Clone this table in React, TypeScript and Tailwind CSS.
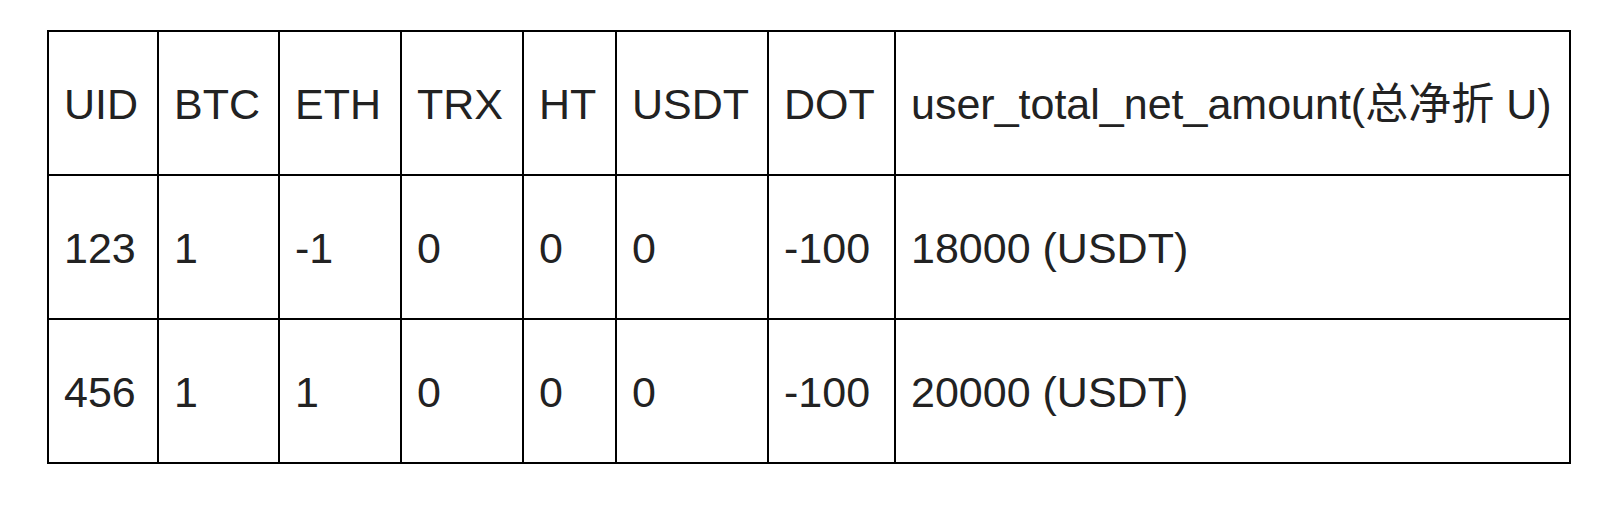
const headers = ["UID", "BTC", "ETH", "TRX", "HT", "USDT", "DOT", "user_total_net_amount(总净折 U)"];

const rows = [
  ["123", "1", "-1", "0", "0", "0", "-100", "18000 (USDT)"],
  ["456", "1", "1", "0", "0", "0", "-100", "20000 (USDT)"],
];

const widths = ["w-[110px]", "w-[121px]", "w-[122px]", "w-[122px]", "w-[93px]", "w-[152px]", "w-[127px]", "w-[675px]"];

export default function App() {
  return (
    <div className="min-h-screen bg-white pl-[47px] pt-[30px] font-['Liberation_Sans','Noto_Sans_CJK_SC',sans-serif] text-[#222]">
      <table className="table-fixed border-collapse">
        <colgroup>
          {widths.map((w, i) => (
            <col key={i} className={w} />
          ))}
        </colgroup>
        <tbody>
          <tr className="h-[144px]">
            {headers.map((h) => (
              <td key={h} className="border-2 border-black pl-[15px] pr-0 pt-[2px] text-[43px] leading-none whitespace-nowrap">
                {h}
              </td>
            ))}
          </tr>
          {rows.map((r) => (
            <tr key={r[0]} className="h-[144px]">
              {r.map((c, i) => (
                <td key={i} className="border-2 border-black pl-[15px] pr-0 pt-[2px] text-[43px] leading-none whitespace-nowrap">
                  {c}
                </td>
              ))}
            </tr>
          ))}
        </tbody>
      </table>
    </div>
  );
}
